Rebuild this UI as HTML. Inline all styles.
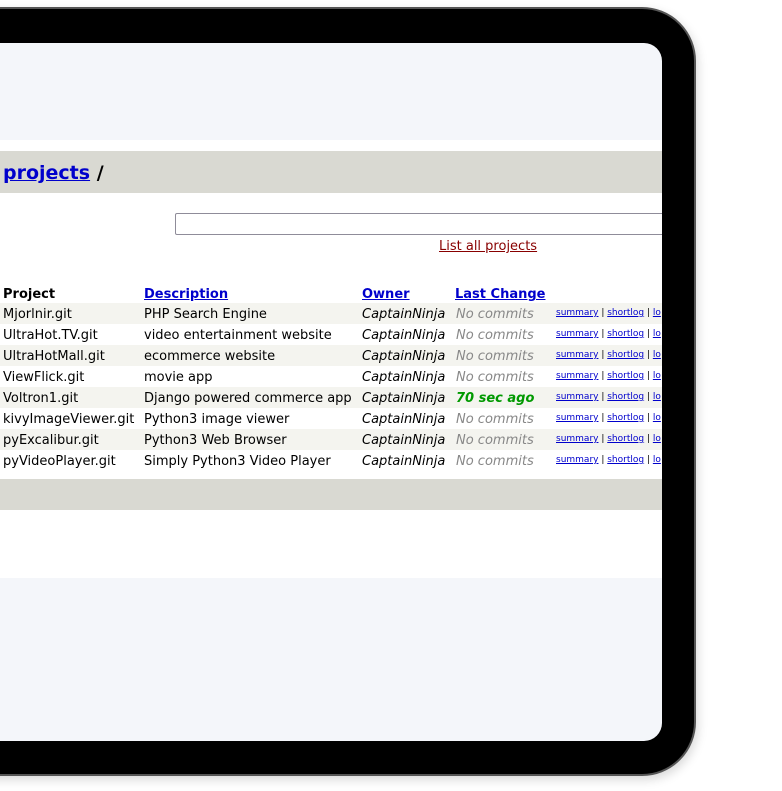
<!DOCTYPE html>
<html><head><meta charset="utf-8"><style>
*{margin:0;padding:0;box-sizing:border-box}
body{width:782px;height:791px;background:#fff;position:relative;overflow:hidden;font-family:"DejaVu Sans","Liberation Sans",sans-serif;font-size:13px;color:#000}
.frame{position:absolute;left:-80px;top:7px;width:776px;height:769px;background:#000;border:2px solid #555;border-radius:54px;box-shadow:2px 4px 10px rgba(0,0,0,.15)}
.screen{position:absolute;left:0;top:43px;width:662px;height:698px;background:#f4f6fa;border-radius:0 18px 18px 0;overflow:hidden}
.abs{position:absolute;white-space:nowrap}
a{color:#0000cc;text-decoration:underline}
.band{position:absolute;left:0;width:662px;background:#d9d9d2}
.row{position:absolute;left:0;width:662px;height:21px}
.row span{position:absolute;top:4px;white-space:nowrap}
.row span.lk{font-size:9px;top:5px;color:#000}
.lk a{color:#0000cc}
.s{position:absolute;left:0;top:43px;width:662px}
</style></head><body>
<div class="frame"></div>
<div class="screen">
<div class="abs" style="left:0;top:97px;width:662px;height:438px;background:#fff"></div>
<div class="band" style="top:108px;height:42px"></div>
<div class="abs" style="left:3px;top:119px;font-size:19px;font-weight:bold"><a href="#">projects</a> /</div>
<div class="abs" style="left:175px;top:170px;width:500px;height:22px;border:1px solid #8f8c99;border-radius:2px;background:#fff"></div>
<div class="abs" style="left:439px;top:196px;color:#880000"><a href="#" style="color:#880000">List all projects</a></div>
<div class="abs" style="left:3px;top:244px;font-weight:bold">Project</div>
<div class="abs" style="left:144px;top:244px;font-weight:bold"><a href="#">Description</a></div>
<div class="abs" style="left:362px;top:244px;font-weight:bold"><a href="#">Owner</a></div>
<div class="abs" style="left:455px;top:244px;font-weight:bold"><a href="#">Last Change</a></div>
<div class="band" style="top:436px;height:31px"></div>
</div>
<div class="s">
<div class="row" style="top:260px;background:#f4f4ef"><span style="left:3px">Mjorlnir.git</span><span style="left:144px">PHP Search Engine</span><span style="left:362px;font-style:italic">CaptainNinja</span><span style="left:456px;font-style:italic;color:#888">No commits</span><span class="lk" style="left:556px"><a href="#">summary</a> | <a href="#">shortlog</a> | <a href="#">lo</a></span></div>
<div class="row" style="top:281px"><span style="left:3px">UltraHot.TV.git</span><span style="left:144px">video entertainment website</span><span style="left:362px;font-style:italic">CaptainNinja</span><span style="left:456px;font-style:italic;color:#888">No commits</span><span class="lk" style="left:556px"><a href="#">summary</a> | <a href="#">shortlog</a> | <a href="#">lo</a></span></div>
<div class="row" style="top:302px;background:#f4f4ef"><span style="left:3px">UltraHotMall.git</span><span style="left:144px">ecommerce website</span><span style="left:362px;font-style:italic">CaptainNinja</span><span style="left:456px;font-style:italic;color:#888">No commits</span><span class="lk" style="left:556px"><a href="#">summary</a> | <a href="#">shortlog</a> | <a href="#">lo</a></span></div>
<div class="row" style="top:323px"><span style="left:3px">ViewFlick.git</span><span style="left:144px">movie app</span><span style="left:362px;font-style:italic">CaptainNinja</span><span style="left:456px;font-style:italic;color:#888">No commits</span><span class="lk" style="left:556px"><a href="#">summary</a> | <a href="#">shortlog</a> | <a href="#">lo</a></span></div>
<div class="row" style="top:344px;background:#f4f4ef"><span style="left:3px">Voltron1.git</span><span style="left:144px">Django powered commerce app</span><span style="left:362px;font-style:italic">CaptainNinja</span><span style="left:456px;font-style:italic;font-weight:bold;color:#009900">70 sec ago</span><span class="lk" style="left:556px"><a href="#">summary</a> | <a href="#">shortlog</a> | <a href="#">lo</a></span></div>
<div class="row" style="top:365px"><span style="left:3px">kivyImageViewer.git</span><span style="left:144px">Python3 image viewer</span><span style="left:362px;font-style:italic">CaptainNinja</span><span style="left:456px;font-style:italic;color:#888">No commits</span><span class="lk" style="left:556px"><a href="#">summary</a> | <a href="#">shortlog</a> | <a href="#">lo</a></span></div>
<div class="row" style="top:386px;background:#f4f4ef"><span style="left:3px">pyExcalibur.git</span><span style="left:144px">Python3 Web Browser</span><span style="left:362px;font-style:italic">CaptainNinja</span><span style="left:456px;font-style:italic;color:#888">No commits</span><span class="lk" style="left:556px"><a href="#">summary</a> | <a href="#">shortlog</a> | <a href="#">lo</a></span></div>
<div class="row" style="top:407px"><span style="left:3px">pyVideoPlayer.git</span><span style="left:144px">Simply Python3 Video Player</span><span style="left:362px;font-style:italic">CaptainNinja</span><span style="left:456px;font-style:italic;color:#888">No commits</span><span class="lk" style="left:556px"><a href="#">summary</a> | <a href="#">shortlog</a> | <a href="#">lo</a></span></div>
</div>
</body></html>
